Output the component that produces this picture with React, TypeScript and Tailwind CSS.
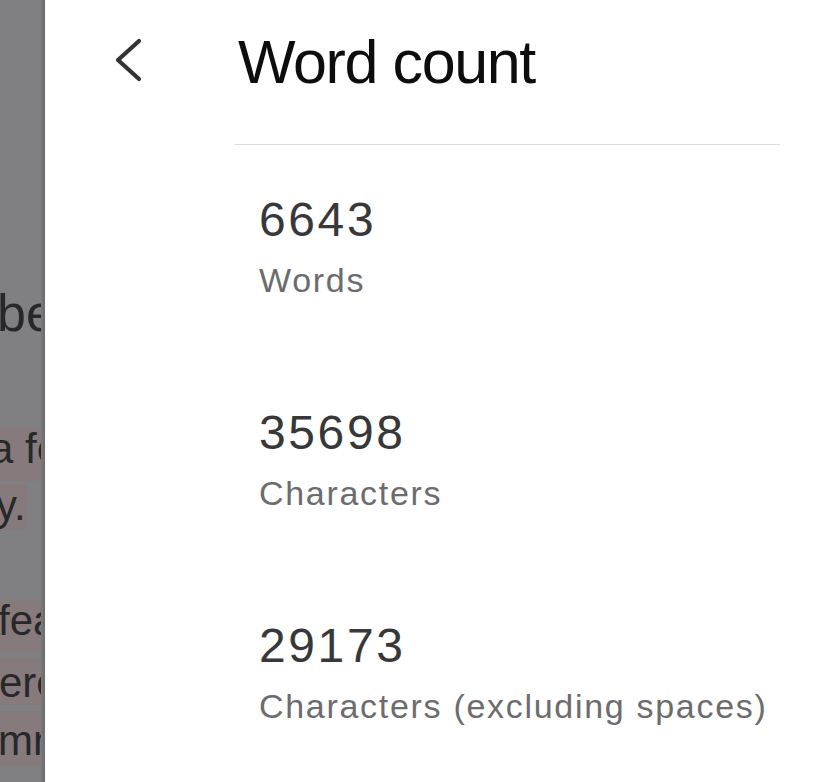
import React from "react";

const strip = "font-['Liberation_Sans',Arial,sans-serif] text-[#28282a]";

function Stat({ value, label, first }: { value: string; label: string; first?: boolean }) {
  return (
    <div className={first ? "mt-[47px]" : "mt-[105px]"}>
      <div className="text-[48px] leading-[56px] tracking-[2.6px] text-[#38383a]">{value}</div>
      <div className="mt-[12px] text-[34px] leading-[40px] tracking-[1.7px] text-[#6c6c6e]">{label}</div>
    </div>
  );
}

export default function App() {
  return (
    <div className="flex h-[782px] w-[828px] overflow-hidden bg-white font-['Liberation_Sans',Arial,sans-serif]">
      {/* dimmed document behind the panel */}
      <div className={`relative flex w-[45px] shrink-0 flex-col overflow-hidden bg-[#808082] ${strip}`}>
        <div className="mt-[287px] ml-[-3px] h-[52px] whitespace-nowrap text-[52px] leading-[52px]">beginning</div>
        <div className="mt-[89px] h-[53px] whitespace-nowrap bg-[#877a7c] text-[42px] leading-[42px]">
          <span className="ml-[-10px]">a few</span>
        </div>
        <div className="mt-[4px] h-[45px] w-[27px] whitespace-nowrap bg-[#877a7c] text-[42px] leading-[42px]">
          <span className="ml-[-4px]">y.</span>
        </div>
        <div className="mt-[70px] h-[52px] whitespace-nowrap bg-[#877a7c] text-[42px] leading-[42px]">
          <span className="ml-[-2px]">feature</span>
        </div>
        <div className="mt-[6px] h-[47px] whitespace-nowrap bg-[#877a7c] pt-[4px] text-[42px] leading-[42px]">
          <span className="ml-[-1px]">ere</span>
        </div>
        <div className="mt-[6px] h-[55px] whitespace-nowrap bg-[#877a7c] pt-[9px] text-[42px] leading-[42px]">
          <span className="ml-[-2px]">mn</span>
        </div>
        <div className="absolute right-0 top-0 h-full w-[4px] bg-gradient-to-r from-[#7a7a7c] to-[#6a6a6c]" />
      </div>

      {/* word count panel */}
      <div className="flex flex-1 flex-col bg-white">
        <div className="mt-[26px] flex items-start pl-[67px]">
          <svg width="32" height="48" viewBox="0 0 32 48" className="mt-[10px] shrink-0" fill="none">
            <polyline
              points="27,5 6,24 27,43"
              stroke="#333335"
              strokeWidth="4.2"
              strokeLinecap="round"
              strokeLinejoin="round"
            />
          </svg>
          <div className="ml-[94px] text-[61px] leading-[72px] tracking-[-1.4px] text-[#0d0d0d]">Word count</div>
        </div>
        <div className="mt-[46px] ml-[190px] mr-[48px] h-px bg-[#dcdcde]" />
        <div className="pl-[214px]">
          <Stat first value="6643" label="Words" />
          <Stat value="35698" label="Characters" />
          <Stat value="29173" label="Characters (excluding spaces)" />
        </div>
      </div>
    </div>
  );
}
